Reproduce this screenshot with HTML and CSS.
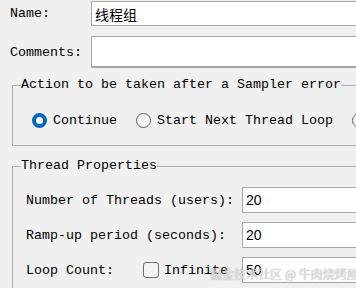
FILE: index.html
```html
<!DOCTYPE html>
<html lang="zh-CN">
<head>
  <meta charset="UTF-8" />
  <meta name="viewport" content="width=device-width, initial-scale=1.0"/>
  <title>线程组</title>
  <link rel="stylesheet" href="styles.css">
</head>
<body>
  <div class="page">
    <div class="field-row name-row">
      <label class="field-label">Name:</label>
      <input type="text" class="text-box" value="线程组">
    </div>

    <div class="field-row comments-row">
      <label class="field-label">Comments:</label>
      <input type="text" class="text-box">
    </div>

    <fieldset class="group action-group">
      <legend>Action to be taken after a Sampler error</legend>
      <div class="radio-row">
        <label class="radio"><input type="radio" name="onError" checked>Continue</label>
        <label class="radio"><input type="radio" name="onError">Start Next Thread Loop</label>
        <label class="radio"><input type="radio" name="onError">Stop Thread</label>
      </div>
    </fieldset>

    <fieldset class="group thread-group">
      <legend>Thread Properties</legend>
      <div class="thread-grid">
        <label>Number of Threads (users):</label>
        <input type="text" class="text-box" value="20">

        <label>Ramp-up period (seconds):</label>
        <input type="text" class="text-box" value="20">

        <div class="loop-cell">
          <label>Loop Count:</label>
          <label class="check"><input type="checkbox">Infinite</label>
        </div>
        <input type="text" class="text-box" value="50">
      </div>
    </fieldset>
  </div>

  <div class="watermark">掘金技术社区 @ 牛肉烧烤屋</div>
</body>
</html>
```

FILE: styles.css
```css
html, body {
  margin: 0;
  background: #f0f0f0;
  overflow: hidden;
}
body {
  font-family: "Liberation Mono", "Noto Sans CJK SC", monospace;
  font-size: 13.33px;
  color: #000;
}
.page {
  width: 440px;
}
.field-row {
  display: flex;
  align-items: center;
  padding-left: 10px;
}
.field-label {
  width: 81px;
  flex: none;
}
.text-box {
  flex: 1;
  min-width: 0;
  box-sizing: border-box;
  height: 26px;
  margin: 0;
  padding: 0 3px;
  border: 1px solid #a6a6a6;
  background: #fff;
  font-family: "Liberation Sans", "Noto Sans CJK SC", sans-serif;
  font-size: 14px;
  color: #000;
  outline: none;
}
.name-row {
  margin-top: 1px;
}
.name-row .text-box {
  height: 25px;
}
.comments-row {
  margin-top: 10px;
}
.comments-row .text-box {
  height: 32px;
  border-bottom-width: 2px;
}
.group {
  margin: 9px 0 0 12px;
  padding: 0;
  min-width: 0;
  border: 1px solid #adadad;
}
.group legend {
  margin-left: 8px;
  padding: 0;
  line-height: 16px;
}
.radio-row {
  display: flex;
  gap: 19px;
  padding: 20px 0 17px 19px;
}
.radio, .check {
  display: flex;
  align-items: center;
  gap: 6px;
  white-space: nowrap;
}
.radio input {
  appearance: none;
  flex: none;
  box-sizing: border-box;
  width: 15px;
  height: 15px;
  margin: 0;
  border: 1px solid #5f5f5f;
  border-radius: 50%;
  background: #f7f7f7;
}
.radio input:checked {
  border: 4px solid #0067c0;
  background: #fff;
}
.thread-group {
  margin-top: 12px;
}
.thread-grid {
  display: grid;
  grid-template-columns: 216px 1fr;
  row-gap: 9px;
  align-items: center;
  padding: 13px 0 20px 13px;
}
.loop-cell {
  display: flex;
  align-items: center;
}
.check {
  margin-left: 29px;
  gap: 5px;
}
.check input {
  appearance: none;
  flex: none;
  box-sizing: border-box;
  width: 16px;
  height: 16px;
  margin: 0;
  border: 1px solid #6f6f6f;
  border-radius: 3px;
  background: #f4f4f4;
}
.watermark {
  position: absolute;
  left: 210px;
  top: 266px;
  font-family: "Noto Sans CJK SC", sans-serif;
  font-size: 12px;
  line-height: 16px;
  color: rgba(235, 235, 235, 0.9);
  text-shadow: 0 0 1px rgba(60, 60, 60, 0.55);
  white-space: nowrap;
}
```
